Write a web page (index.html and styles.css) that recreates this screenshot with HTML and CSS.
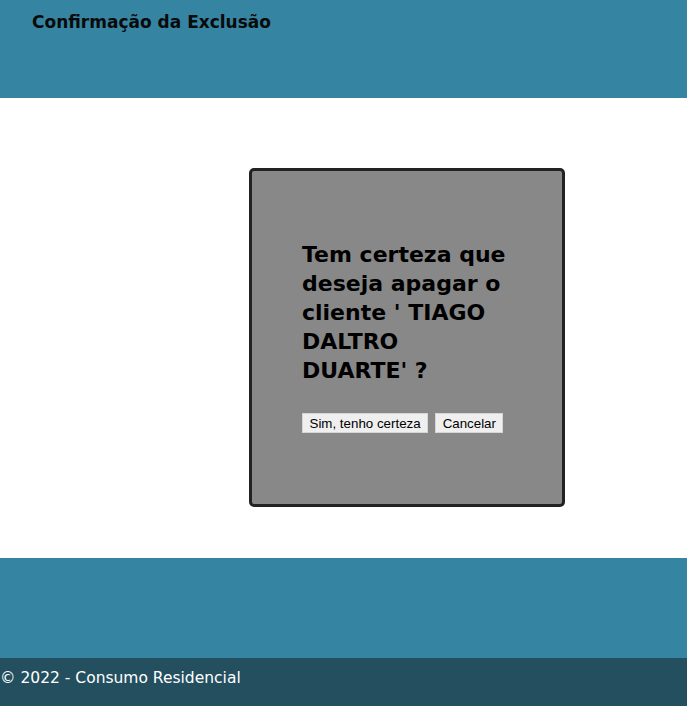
FILE: index.html
```html
<!DOCTYPE html>
<html lang="pt-BR">
<head>
<meta charset="utf-8">
<title>Confirmação da Exclusão</title>
<link rel="stylesheet" href="styles.css">
</head>
<body>
<header class="top">
  <h1 class="top-title">Confirmação da Exclusão</h1>
</header>
<main class="content">
  <section class="dialog">
    <h2 class="dialog-question">Tem certeza que deseja apagar o cliente ' TIAGO DALTRO DUARTE' ?</h2>
    <div class="dialog-actions">
      <button class="btn" type="button">Sim, tenho certeza</button>
      <button class="btn" type="button">Cancelar</button>
    </div>
  </section>
</main>
<div class="band"></div>
<footer class="foot">
  <p class="foot-text">© 2022 - Consumo Residencial</p>
</footer>
</body>
</html>
```
FILE: styles.css
```css
html, body {
  margin: 0;
  padding: 0;
}
body {
  font-family: "DejaVu Sans", "Noto Sans", sans-serif;
  background: #ffffff;
  color: #000;
}
.top {
  background: #3584a2;
  height: 98px;
  box-sizing: border-box;
  padding: 12px 0 0 32px;
}
.top-title {
  margin: 0;
  font-size: 17px;
  line-height: 20px;
  font-weight: bold;
  color: #0a0a0a;
}
.content {
  height: 460px;
  box-sizing: border-box;
  padding-top: 70px;
  padding-left: 249px;
}
.dialog {
  width: 316px;
  height: 339px;
  box-sizing: border-box;
  background: #888888;
  border: 3px solid #222222;
  border-radius: 5px;
  padding: 69px 54px 0 50px;
}
.dialog-question {
  margin: 0;
  font-size: 22px;
  line-height: 29px;
  font-weight: bold;
  color: #000;
}
.dialog-actions {
  margin-top: 28px;
  display: flex;
  gap: 7px;
}
.btn {
  font-family: "Liberation Sans", Arial, sans-serif;
  font-size: 13.333px;
  height: 20px;
  padding: 0 6.5px;
  background: #efefef;
  border: 1px solid #d6d6d6;
  border-radius: 0;
  color: #000;
}
.band {
  background: #3584a2;
  height: 100px;
}
.foot {
  background: #234f5f;
  height: 48px;
  box-sizing: border-box;
  padding-top: 10px;
}
.foot-text {
  margin: 0;
  color: #ffffff;
  font-size: 15.5px;
  line-height: 20px;
}
```
